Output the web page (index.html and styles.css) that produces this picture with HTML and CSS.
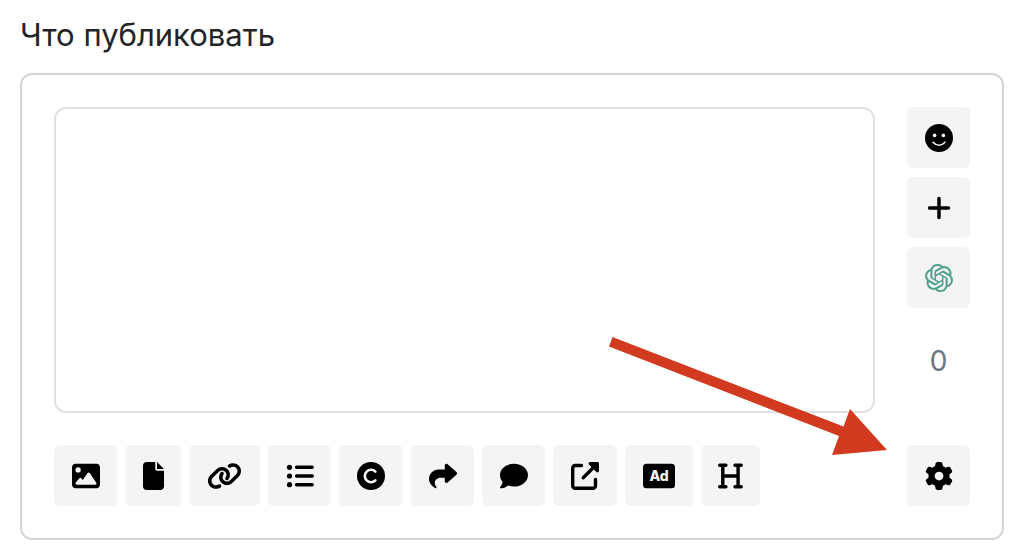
FILE: index.html
```html
<!DOCTYPE html>
<html lang="ru">
<head>
<meta charset="utf-8">
<meta name="viewport" content="width=device-width, initial-scale=1">
<title>Что публиковать</title>
<link rel="stylesheet" href="styles.css">
</head>
<body>
<main class="page">
  <label class="title" for="post">Что публиковать</label>
  <section class="card">
    <textarea class="editor" id="post"></textarea>
    <div class="side">
      <button class="btn" type="button" aria-label="Эмодзи">
        <svg class="icon" viewBox="0 0 28 28"><circle cx="14" cy="14" r="14"/><g fill="#f4f4f4"><circle cx="9.6" cy="11.4" r="1.8"/><circle cx="18.4" cy="11.4" r="1.8"/></g><path d="M8 18.2Q14 24.4 20 18.2" fill="none" stroke="#f4f4f4" stroke-width="1.6" stroke-linecap="round"/></svg>
      </button>
      <button class="btn" type="button" aria-label="Добавить">
        <svg class="icon" viewBox="0 0 28 28"><path d="M14 4.5v19M4.5 14h19" fill="none" stroke="#000" stroke-width="3.5" stroke-linecap="round"/></svg>
      </button>
      <button class="btn" type="button" aria-label="ChatGPT">
        <svg class="icon icon-gpt" viewBox="0 0 24 24"><path d="M22.2819 9.8211a5.9847 5.9847 0 0 0-.5157-4.9108 6.0462 6.0462 0 0 0-6.5098-2.9A6.0651 6.0651 0 0 0 4.9807 4.1818a5.9847 5.9847 0 0 0-3.9977 2.9 6.0462 6.0462 0 0 0 .7427 7.0966 5.98 5.98 0 0 0 .511 4.9107 6.051 6.051 0 0 0 6.5146 2.9001A5.9847 5.9847 0 0 0 13.2599 24a6.0557 6.0557 0 0 0 5.7718-4.2058 5.9894 5.9894 0 0 0 3.9977-2.9001 6.0557 6.0557 0 0 0-.7475-7.0729zm-9.022 12.6081a4.4755 4.4755 0 0 1-2.8764-1.0408l.1419-.0804 4.7783-2.7582a.7948.7948 0 0 0 .3927-.6813v-6.7369l2.02 1.1686a.071.071 0 0 1 .038.052v5.5826a4.504 4.504 0 0 1-4.4945 4.4944zm-9.6607-4.1254a4.4708 4.4708 0 0 1-.5346-3.0137l.142.0852 4.783 2.7582a.7712.7712 0 0 0 .7806 0l5.8428-3.3685v2.3324a.0804.0804 0 0 1-.0332.0615L9.74 19.9502a4.4992 4.4992 0 0 1-6.1408-1.6464zM2.3408 7.8956a4.485 4.485 0 0 1 2.3655-1.9728V11.6a.7664.7664 0 0 0 .3879.6765l5.8144 3.3543-2.0201 1.1685a.0757.0757 0 0 1-.071 0l-4.8303-2.7865A4.504 4.504 0 0 1 2.3408 7.872zm16.5963 3.8558L13.1038 8.364 15.1192 7.2a.0757.0757 0 0 1 .071 0l4.8303 2.7913a4.4944 4.4944 0 0 1-.6765 8.1042v-5.6772a.79.79 0 0 0-.407-.667zm2.0107-3.0231l-.142-.0852-4.7735-2.7818a.7759.7759 0 0 0-.7854 0L9.409 9.2297V6.8974a.0662.0662 0 0 1 .0284-.0615l4.8303-2.7866a4.4992 4.4992 0 0 1 6.6802 4.66zM8.3065 12.863l-2.02-1.1638a.0804.0804 0 0 1-.038-.0567V6.0742a4.4992 4.4992 0 0 1 7.3757-3.4537l-.142.0805L8.704 5.459a.7948.7948 0 0 0-.3927.6813zm1.0976-2.3654l2.602-1.4998 2.6069 1.4998v2.9994l-2.5974 1.4997-2.6067-1.4997Z"/></svg>
      </button>
      <output class="counter" for="post">0</output>
    </div>
    <div class="toolbar">
      <button class="btn" type="button" aria-label="Изображение">
        <svg class="icon" viewBox="0 0 512 512"><path d="M0 96C0 60.700 28.700 32 64 32H448c35.300 0 64 28.700 64 64V416c0 35.300-28.700 64-64 64H64c-35.300 0-64-28.700-64-64V96zM323.800 202.500c-4.500-6.600-11.900-10.500-19.800-10.500s-15.400 3.900-19.800 10.500l-87 127.600L170.700 297c-4.600-5.700-11.500-9-18.700-9s-14.200 3.300-18.700 9l-64 80c-5.800 7.200-6.900 17.100-2.900 25.400s12.400 13.600 21.600 13.600H424c8.900 0 17.100-4.900 21.200-12.800s3.600-17.400-1.400-24.700l-120-176zM112 192a48 48 0 1 0 0-96 48 48 0 1 0 0 96z"/></svg>
      </button>
      <button class="btn" type="button" aria-label="Файл">
        <svg class="icon" viewBox="0 0 384 512"><path d="M0 64C0 28.700 28.700 0 64 0H224V128c0 17.700 14.300 32 32 32H384V448c0 35.300-28.700 64-64 64H64c-35.300 0-64-28.700-64-64V64zm384 64H256V0L384 128z"/></svg>
      </button>
      <button class="btn" type="button" aria-label="Ссылка">
        <svg class="icon" viewBox="0 0 640 512"><path d="M579.800 267.700c56.500-56.500 56.500-148 0-204.500c-50-50-128.800-56.500-186.300-15.400l-1.600 1.100c-14.400 10.300-17.700 30.300-7.400 44.600s30.300 17.700 44.600 7.400l1.600-1.100c32.100-22.900 76-19.300 103.800 8.600c31.500 31.500 31.500 82.500 0 114L422.300 334.800c-31.500 31.500-82.500 31.500-114 0c-27.900-27.900-31.500-71.800-8.600-103.800l1.100-1.600c10.300-14.400 6.900-34.400-7.400-44.600s-34.400-6.900-44.600 7.400l-1.100 1.600C206.500 251.200 213 330 263 380c56.500 56.500 148 56.500 204.500 0L579.800 267.700zM60.200 244.300c-56.500 56.500-56.500 148 0 204.500c50 50 128.800 56.500 186.300 15.400l1.600-1.100c14.400-10.300 17.700-30.300 7.400-44.600s-30.300-17.700-44.600-7.400l-1.600 1.100c-32.100 22.900-76 19.300-103.800-8.600C74 372 74 321 105.500 289.500L217.700 177.200c31.500-31.500 82.500-31.500 114 0c27.900 27.900 31.500 71.800 8.600 103.900l-1.100 1.600c-10.300 14.400-6.900 34.400 7.400 44.600s34.400 6.900 44.600-7.400l1.100-1.600C433.500 260.800 427 182 377 132c-56.500-56.500-148-56.500-204.500 0L60.200 244.300z"/></svg>
      </button>
      <button class="btn" type="button" aria-label="Список">
        <svg class="icon" viewBox="0 0 28 28"><circle cx="3.500" cy="5.300" r="2.600"/><circle cx="3.500" cy="14" r="2.600"/><circle cx="3.500" cy="22.700" r="2.600"/><path d="M10.600 5.300h15.600M10.600 14h15.600M10.600 22.700h15.600" fill="none" stroke="#000" stroke-width="3.500" stroke-linecap="round"/></svg>
      </button>
      <button class="btn" type="button" aria-label="Авторские права">
        <svg class="icon" viewBox="0 0 28 28"><circle cx="14" cy="14" r="14"/><path d="M18.400 9.600a6.200 6.200 0 1 0 0 8.800" fill="none" stroke="#f4f4f4" stroke-width="2.600" stroke-linecap="round"/></svg>
      </button>
      <button class="btn" type="button" aria-label="Поделиться">
        <svg class="icon" viewBox="0 0 28 28"><path d="M15.750 3.500c0-1.500 1.700-2.300 2.900-1.300l8.800 7.900c.75.700.75 1.900 0 2.600l-8.800 7.900c-1.200 1-2.900.2-2.900-1.300v-3.500h-4.300c-3.100 0-5.700 2.300-5.700 5.300 0 1.600.8 2.600 1.500 3.300.4.400.4.800.3 1.200-.2.700-.9.900-1.500.5C3.200 24.300 0 21.600 0 17.100 0 11.800 4.300 7.500 9.600 7.500h6.150z"/></svg>
      </button>
      <button class="btn" type="button" aria-label="Комментарий">
        <svg class="icon" viewBox="0 0 512 512"><path d="M512 240c0 114.900-114.600 208-256 208c-37.100 0-72.300-6.400-104.100-17.900c-11.900 8.700-31.300 20.600-54.300 30.600C73.600 471.100 44.700 480 16 480c-6.500 0-12.300-3.900-14.800-9.900c-2.500-6-1.100-12.800 3.400-17.400l.3-.3c.3-.3 .7-.7 1.300-1.400c1.100-1.200 2.800-3.100 4.900-5.700c4.100-5 9.600-12.400 15.200-21.600c10-16.600 19.500-38.400 21.400-62.900C17.700 326.800 0 285.100 0 240C0 125.100 114.600 32 256 32s256 93.100 256 208z"/></svg>
      </button>
      <button class="btn" type="button" aria-label="Внешняя ссылка">
        <svg class="icon" viewBox="0 0 28 28"><path d="M10.500 3.500H4.300A2.600 2.600 0 0 0 1.700 6.100v17.600a2.600 2.600 0 0 0 2.600 2.600h17.600a2.600 2.600 0 0 0 2.600-2.600V17.500" fill="none" stroke="#000" stroke-width="3.400" stroke-linecap="round"/><path d="M12.200 15.800 23.500 4.500" fill="none" stroke="#000" stroke-width="3.400" stroke-linecap="round"/><path d="M19.200 0h7.400C27.400 0 28 .6 28 1.400v7.400c0 1.500-1.600 2.200-2.600 1.200l-7.400-7.400C17 1.600 17.700 0 19.200 0z"/></svg>
      </button>
      <button class="btn" type="button" aria-label="Реклама">
        <svg class="icon" viewBox="0 0 32 28"><rect y="1.700" width="32" height="24.600" rx="3.500"/><text class="ad-text" x="16" y="19" text-anchor="middle">Ad</text></svg>
      </button>
      <button class="btn" type="button" aria-label="Заголовок">
        <svg class="icon" viewBox="0 0 25 28"><path d="M1.700 3.300h6.200M17 3.300h6.200M1.700 24.700h6.200M17 24.700h6.200M4.800 3.300v21.400M20.100 3.300v21.400M4.800 14h15.300" fill="none" stroke="#000" stroke-width="3.400" stroke-linecap="round"/></svg>
      </button>
    </div>
    <button class="btn" type="button" aria-label="Настройки">
      <svg class="icon" viewBox="0 0 512 512"><path d="M495.900 166.600c3.200 8.700 .5 18.400-6.400 24.600l-43.300 39.400c1.100 8.300 1.700 16.800 1.700 25.400s-.6 17.100-1.700 25.400l43.300 39.400c6.900 6.200 9.600 15.900 6.400 24.600c-4.400 11.900-9.700 23.300-15.800 34.300l-4.700 8.100c-6.600 11-14 21.400-22.100 31.200c-5.900 7.200-15.700 9.600-24.500 6.800l-55.700-17.700c-13.400 10.300-28.200 18.900-44 25.400l-12.500 57.100c-2 9.100-9 16.300-18.200 17.800c-13.800 2.300-28 3.500-42.500 3.500s-28.700-1.200-42.500-3.500c-9.200-1.500-16.200-8.700-18.200-17.800l-12.500-57.100c-15.800-6.500-30.600-15.100-44-25.400L83.100 425.900c-8.800 2.800-18.600 .3-24.500-6.800c-8.100-9.800-15.500-20.200-22.100-31.200l-4.700-8.100c-6.100-11-11.400-22.400-15.800-34.300c-3.200-8.700-.5-18.400 6.400-24.600l43.300-39.400C64.600 273.100 64 264.600 64 256s.6-17.100 1.700-25.400L22.400 191.200c-6.900-6.200-9.600-15.900-6.400-24.600c4.400-11.900 9.700-23.300 15.800-34.300l4.700-8.100c6.600-11 14-21.400 22.100-31.200c5.900-7.200 15.700-9.600 24.500-6.800l55.700 17.700c13.400-10.300 28.200-18.900 44-25.400l12.500-57.100c2-9.100 9-16.300 18.200-17.800C227.300 1.200 241.500 0 256 0s28.700 1.200 42.500 3.500c9.200 1.500 16.200 8.700 18.200 17.800l12.500 57.100c15.800 6.500 30.600 15.100 44 25.400l55.700-17.700c8.800-2.800 18.600-.3 24.500 6.800c8.100 9.800 15.500 20.200 22.100 31.200l4.700 8.100c6.100 11 11.400 22.400 15.800 34.300zM256 336a80 80 0 1 0 0-160 80 80 0 1 0 0 160z"/></svg>
    </button>
    <svg class="pointer" viewBox="0 0 278 118" aria-hidden="true"><path d="M3.500 0 234.500 89.500 241 72 278 113 223 118 230 99 0 9.500z"/></svg>
  </section>
</main>
</body>
</html>
```
FILE: styles.css
```css
* {
  box-sizing: border-box;
}

body {
  margin: 0;
  background: #fff;
  color: #212529;
  font-family: Inter, "Liberation Sans", sans-serif;
}

.page {
  padding: 15px 20px 20px;
}

.title {
  display: block;
  margin-bottom: 18px;
  font-size: 31px;
  line-height: 40px;
}

.card {
  position: relative;
  display: grid;
  grid-template-columns: 1fr 63px;
  gap: 32px;
  padding: 32px;
  border: 2px solid #d1d6db;
  border-radius: 12px;
}

.editor {
  display: block;
  width: 100%;
  height: 306px;
  padding: 12px 24px;
  border: 2px solid #dee2e6;
  border-radius: 12px;
  background: #fff;
  color: inherit;
  font: inherit;
  font-size: 28px;
  resize: none;
}

.side {
  display: flex;
  flex-direction: column;
  gap: 9px;
}

.btn {
  display: flex;
  align-items: center;
  justify-content: center;
  height: 61px;
  padding: 0;
  border: 0;
  border-radius: 6px;
  background: #f4f4f4;
  cursor: pointer;
}

.icon {
  display: block;
  height: 28px;
  fill: #000;
}

.icon-gpt {
  fill: #4fa08b;
  stroke: #4fa08b;
  stroke-width: 0.2;
}

.ad-text {
  fill: #f4f4f4;
  font-family: Inter, sans-serif;
  font-size: 14px;
  font-weight: 800;
}

.counter {
  margin-top: 24px;
  color: #6c757d;
  font-size: 28px;
  line-height: 40px;
  text-align: center;
}

.toolbar {
  display: grid;
  grid-template-columns: 63px 56px 71px 63px 64px 63px 63px 64px 68px 59px;
  gap: 8px;
}

.pointer {
  position: absolute;
  right: 115px;
  bottom: 83px;
  width: 278px;
  fill: #d23a20;
  pointer-events: none;
}
```
